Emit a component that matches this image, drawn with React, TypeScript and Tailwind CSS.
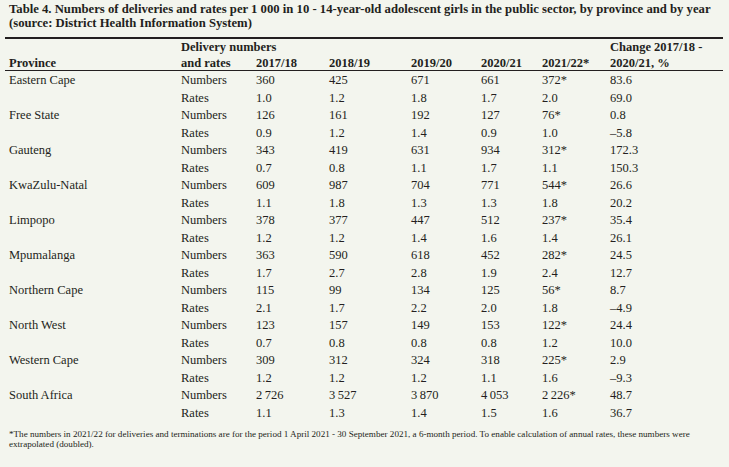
import React from "react";

const rows: [string, string[], string[]][] = [
  ["Eastern Cape", ["360", "425", "671", "661", "372*", "83.6"], ["1.0", "1.2", "1.8", "1.7", "2.0", "69.0"]],
  ["Free State", ["126", "161", "192", "127", "76*", "0.8"], ["0.9", "1.2", "1.4", "0.9", "1.0", "\u20135.8"]],
  ["Gauteng", ["343", "419", "631", "934", "312*", "172.3"], ["0.7", "0.8", "1.1", "1.7", "1.1", "150.3"]],
  ["KwaZulu-Natal", ["609", "987", "704", "771", "544*", "26.6"], ["1.1", "1.8", "1.3", "1.3", "1.8", "20.2"]],
  ["Limpopo", ["378", "377", "447", "512", "237*", "35.4"], ["1.2", "1.2", "1.4", "1.6", "1.4", "26.1"]],
  ["Mpumalanga", ["363", "590", "618", "452", "282*", "24.5"], ["1.7", "2.7", "2.8", "1.9", "2.4", "12.7"]],
  ["Northern Cape", ["115", "99", "134", "125", "56*", "8.7"], ["2.1", "1.7", "2.2", "2.0", "1.8", "\u20134.9"]],
  ["North West", ["123", "157", "149", "153", "122*", "24.4"], ["0.7", "0.8", "0.8", "0.8", "1.2", "10.0"]],
  ["Western Cape", ["309", "312", "324", "318", "225*", "2.9"], ["1.2", "1.2", "1.2", "1.1", "1.6", "\u20139.3"]],
  ["South Africa", ["2\u2009726", "3\u2009527", "3\u2009870", "4\u2009053", "2\u2009226*", "48.7"], ["1.1", "1.3", "1.4", "1.5", "1.6", "36.7"]],
];

const grid = "grid grid-cols-[172px_75px_73px_82px_70px_61px_68px_117px]";

function Row({ label, kind, vals }: { label: string; kind: string; vals: string[] }) {
  return (
    <div className={`${grid} h-[17.5px] leading-[17.5px]`}>
      <div className="pl-[4px] whitespace-nowrap">{label}</div>
      <div className="pl-[4px]">{kind}</div>
      {vals.map((v, i) => (
        <div key={i} className="pl-[4px] whitespace-nowrap">{v}</div>
      ))}
    </div>
  );
}

export default function App() {
  return (
    <div
      className="w-[729px] h-[467px] bg-[#f3f5ee] text-[#231f20] overflow-hidden pl-[5px] pt-[3px]"
      style={{ fontFamily: '"Liberation Serif", "Times New Roman", serif' }}
    >
      <div className="pl-[4px] font-bold text-[12.7px] leading-[13.5px] w-[720px]">
        Table 4. Numbers of deliveries and rates per 1 000 in 10 - 14-year-old adolescent girls in the public sector, by province and by year
        <br />
        (source: District Health Information System)
      </div>
      <div className="w-[718px] mt-[7px] border-t-2 border-[#231f20]">
        <div className={`${grid} h-[32px] leading-[16px] font-bold text-[12.5px] border-b border-[#231f20] whitespace-nowrap`}>
          <div className="pl-[4px] pt-[16px]">Province</div>
          <div className="pl-[4px]">Delivery numbers<br />and rates</div>
          <div className="pl-[4px] pt-[16px]">2017/18</div>
          <div className="pl-[4px] pt-[16px]">2018/19</div>
          <div className="pl-[4px] pt-[16px]">2019/20</div>
          <div className="pl-[4px] pt-[16px]">2020/21</div>
          <div className="pl-[4px] pt-[16px]">2021/22*</div>
          <div className="pl-[4px]">Change 2017/18 -<br />2020/21, %</div>
        </div>
        <div className="text-[12.5px] pt-[1px]">
          {rows.map(([name, nums, rates]) => (
            <React.Fragment key={name}>
              <Row label={name} kind="Numbers" vals={nums} />
              <Row label="" kind="Rates" vals={rates} />
            </React.Fragment>
          ))}
        </div>
      </div>
      <div className="pl-[4px] mt-[7px] text-[9.1px] leading-[10px] w-[705px]">
        *The numbers in 2021/22 for deliveries and terminations are for the period 1 April 2021 - 30 September 2021, a 6-month period. To enable calculation of annual rates, these numbers were extrapolated (doubled).
      </div>
    </div>
  );
}
